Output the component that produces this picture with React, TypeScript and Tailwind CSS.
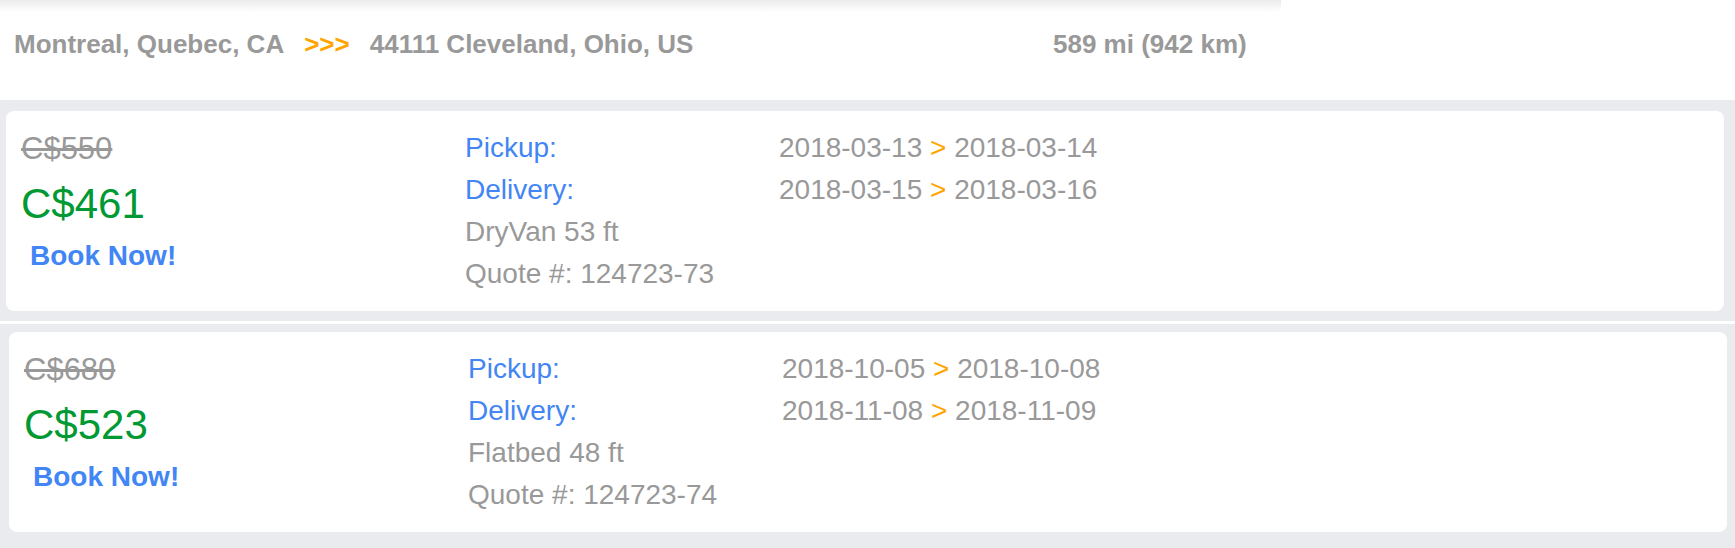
const quotes = [
  {
    oldPrice: 'C$550',
    price: 'C$461',
    pickup: ['2018-03-13', '2018-03-14'],
    delivery: ['2018-03-15', '2018-03-16'],
    equipment: 'DryVan 53 ft',
    quote: '124723-73',
  },
  {
    oldPrice: 'C$680',
    price: 'C$523',
    pickup: ['2018-10-05', '2018-10-08'],
    delivery: ['2018-11-08', '2018-11-09'],
    equipment: 'Flatbed 48 ft',
    quote: '124723-74',
  },
];

function DateRange({ range }: { range: string[] }) {
  return (
    <div className="leading-[42px] text-[#999999]">
      {range[0]} <span className="text-[#ffa500]">&gt;</span> {range[1]}
    </div>
  );
}

function QuoteCard({ q }: { q: (typeof quotes)[number] }) {
  return (
    <div className="flex h-[200px] rounded-lg bg-white">
      <div className="w-[459px] pl-[15px] pt-[15px]">
        <div className="text-[31px] leading-[45px] text-[#999999] line-through">
          {q.oldPrice}
        </div>
        <div className="mt-[3px] text-[42px] leading-[60px] text-[#009933]">
          {q.price}
        </div>
        <a href="#" className="ml-[9px] mt-[2px] block text-[28px] font-bold leading-[40px] text-[#4285f4]">
          Book Now!
        </a>
      </div>
      <div className="w-[314px] pt-[16px] text-[28px]">
        <div className="leading-[42px] text-[#4285f4]">Pickup:</div>
        <div className="leading-[42px] text-[#4285f4]">Delivery:</div>
        <div className="leading-[42px] text-[#999999]">{q.equipment}</div>
        <div className="leading-[42px] text-[#999999]">Quote #: {q.quote}</div>
      </div>
      <div className="pt-[16px] text-[28px]">
        <DateRange range={q.pickup} />
        <DateRange range={q.delivery} />
      </div>
    </div>
  );
}

export default function App() {
  return (
    <div className="min-h-[548px] bg-white font-['Liberation_Sans',Arial,sans-serif]">
      {/* route header */}
      <div className="h-[100px]">
        <div className="h-[12px] w-[1281px] bg-linear-to-b from-[#ebebeb] to-white" />
        <div className="flex pl-[14px] pt-[17px] text-[26px] font-bold leading-[30px] text-[#999999]">
          <div className="flex w-[1039px]">
            <span>Montreal, Quebec, CA</span>
            <span className="mx-[20px] text-[#ffa500]">&gt;&gt;&gt;</span>
            <span>44111 Cleveland, Ohio, US</span>
          </div>
          <span>589 mi (942 km)</span>
        </div>
      </div>

      <div className="bg-[#e9ebee] pb-[10px] pl-[6px] pr-[11px] pt-[11px]">
        <QuoteCard q={quotes[0]} />
      </div>
      <div className="mt-[3px] bg-[#e9ebee] pb-[16px] pl-[9px] pr-[8px] pt-[8px]">
        <QuoteCard q={quotes[1]} />
      </div>
    </div>
  );
}
